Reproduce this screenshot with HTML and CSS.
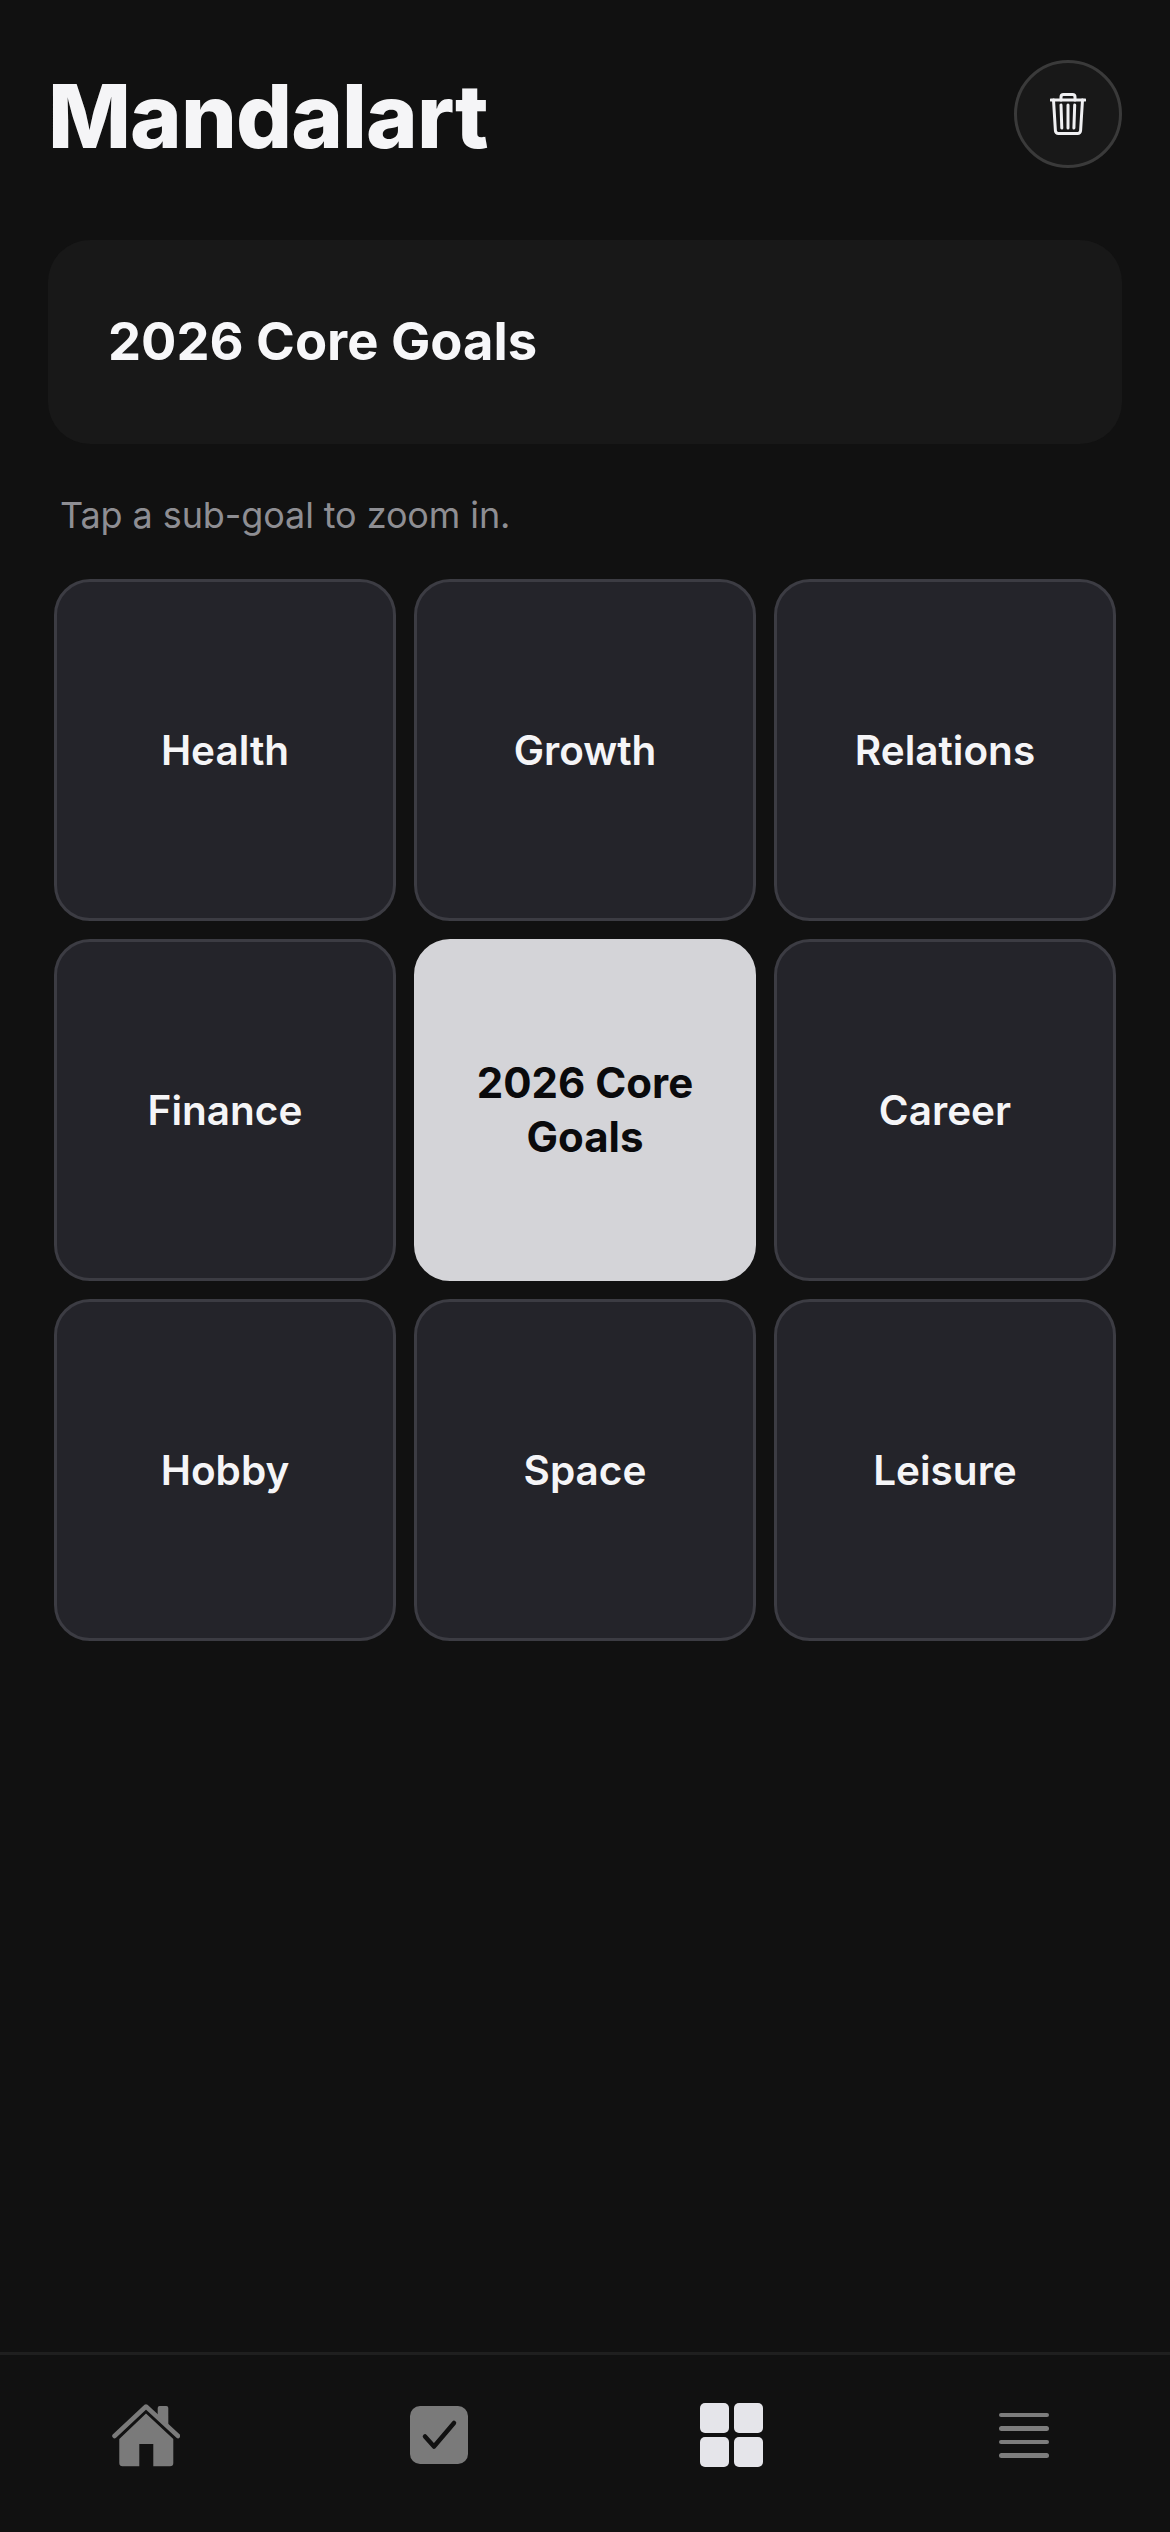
FILE: index.html
```html
<!DOCTYPE html>
<html lang="en">
  <head>
    <meta charset="UTF-8" />
    <meta name="viewport" content="width=device-width, initial-scale=1.0" />
    <title>Mandalart</title>
    <link rel="stylesheet" href="styles.css">
  </head>
  <body>
    <main class="content">
      <header class="header">
        <h1>Mandalart</h1>
        <button class="trash-button" aria-label="Delete">
          <svg viewBox="0 0 36 42">
            <path d="M1 7h34"></path>
            <path d="M11 7V4a2.500 2.500 0 0 1 2.500-2.500h9A2.500 2.500 0 0 1 25 4v3"></path>
            <path d="M3.500 7l1.900 30.500a3 3 0 0 0 3 3h19.200a3 3 0 0 0 3-3L32.500 7"></path>
            <path d="M11 12l.8 23M18 12v23M24.700 12l-.8 23"></path>
          </svg>
        </button>
      </header>

      <section class="goal-card">
        <h2>2026 Core Goals</h2>
      </section>

      <p class="hint">Tap a sub-goal to zoom in.</p>

      <div class="grid">
        <div class="cell">Health</div>
        <div class="cell">Growth</div>
        <div class="cell">Relations</div>
        <div class="cell">Finance</div>
        <div class="cell cell-center">2026 Core Goals</div>
        <div class="cell">Career</div>
        <div class="cell">Hobby</div>
        <div class="cell">Space</div>
        <div class="cell">Leisure</div>
      </div>
    </main>

    <nav class="tabbar">
      <div class="tab">
        <svg class="icon-home" viewBox="0 0 68 64">
          <path class="home-body" d="M34 10.500L61.300 36V60a3.300 3.300 0 0 1-3.300 3.300H41.300V41H27.300V63.300H10.600a3.300 3.300 0 0 1-3.300-3.300V36Z"></path>
          <path class="home-roof" d="M2.500 33L34 3.500L66 33"></path>
          <path class="home-body" d="M45.700 13V5a2 2 0 0 1 2-2h6.600a2 2 0 0 1 2 2V23Z"></path>
        </svg>
      </div>
      <div class="tab">
        <svg class="icon-check" viewBox="0 0 58 58">
          <rect width="58" height="58" rx="10"></rect>
          <path d="M15 30.500L24 40.500L44 17"></path>
        </svg>
      </div>
      <div class="tab">
        <div class="icon-grid">
          <span></span><span></span><span></span><span></span>
        </div>
      </div>
      <div class="tab">
        <div class="icon-menu">
          <span></span><span></span><span></span><span></span>
        </div>
      </div>
    </nav>
  </body>
</html>
```

FILE: styles.css
```css
* {
  margin: 0;
  padding: 0;
  box-sizing: border-box;
  font-family: Inter, "Noto Sans", sans-serif;
}

body {
  background-color: #111111;
  color: #f5f5f7;
  width: 1170px;
  height: 2532px;
  display: flex;
  flex-direction: column;
  overflow: hidden;
}

.content {
  flex: 1;
  padding: 60px 48px 0;
}

.header {
  display: flex;
  justify-content: space-between;
  align-items: center;
  height: 108px;
}

.header h1 {
  font-size: 88px;
  font-weight: 800;
  letter-spacing: -0.9px;
  line-height: 108px;
  margin-top: 3px;
}

.trash-button {
  width: 108px;
  height: 108px;
  border-radius: 50%;
  border: 3px solid #3a3a3a;
  background: #181818;
  display: flex;
  align-items: center;
  justify-content: center;
}

.trash-button svg {
  width: 36px;
  height: 42px;
  fill: none;
  stroke: #f0f0f2;
  stroke-width: 3;
  stroke-linecap: round;
  stroke-linejoin: round;
}

.goal-card {
  margin-top: 72px;
  height: 204px;
  background: #181818;
  border-radius: 42px;
  padding: 0 60px;
  display: flex;
  align-items: center;
}

.goal-card h2 {
  font-size: 52.500px;
  font-weight: 700;
  color: #f7f7f9;
  margin-bottom: 3px;
}

.hint {
  margin-top: 49px;
  padding-left: 12px;
  font-size: 36px;
  letter-spacing: -0.1px;
  line-height: 44px;
  color: #8e8e93;
}

.grid {
  margin: 42px 6px 0;
  display: grid;
  grid-template-columns: repeat(3, 342px);
  grid-auto-rows: 342px;
  gap: 18px;
}

.cell {
  background: #24242a;
  border: 3px solid #3c3c43;
  border-radius: 36px;
  display: flex;
  align-items: center;
  justify-content: center;
  text-align: center;
  padding: 2px 36px 0;
  font-size: 40.500px;
  line-height: 54px;
  font-weight: 600;
  color: #f5f5f7;
}

.cell-center {
  background: #d4d4d8;
  border-color: #d4d4d8;
  color: #0a0a0c;
  padding-top: 0;
  font-size: 42px;
  font-weight: 700;
}

.tabbar {
  height: 180px;
  border-top: 3px solid #1f1f1f;
  display: grid;
  grid-template-columns: repeat(4, 1fr);
  padding-bottom: 17px;
  align-items: center;
}

.tab {
  display: flex;
  justify-content: center;
}

.icon-home {
  width: 68px;
  height: 64px;
}

.home-body {
  fill: #7a7a7a;
}

.home-roof {
  fill: none;
  stroke: #7a7a7a;
  stroke-width: 4.500;
  stroke-linecap: round;
  stroke-linejoin: round;
}

.icon-check {
  width: 58px;
  height: 58px;
}

.icon-check rect {
  fill: #7a7a7a;
}

.icon-check path {
  fill: none;
  stroke: #111111;
  stroke-width: 4.500;
  stroke-linecap: round;
  stroke-linejoin: round;
}

.icon-grid {
  display: grid;
  grid-template-columns: repeat(2, 29px);
  grid-auto-rows: 29.500px;
  gap: 4.500px;
}

.icon-grid span {
  background: #e5e5ea;
  border-radius: 5px;
}

.icon-menu {
  width: 50px;
  display: flex;
  flex-direction: column;
  gap: 9px;
}

.icon-menu span {
  height: 4.500px;
  border-radius: 3px;
  background: #7d7d7d;
}
```
